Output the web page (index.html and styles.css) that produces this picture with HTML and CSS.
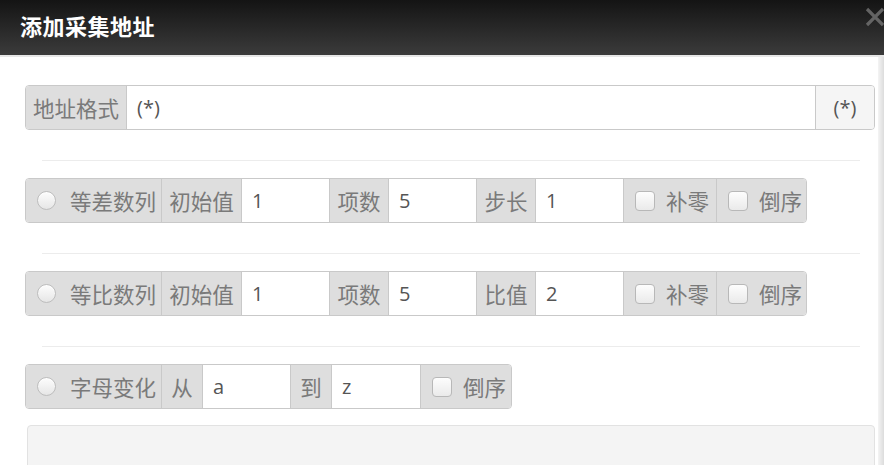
FILE: index.html
```html
<!DOCTYPE html>
<html lang="zh-CN">
<head>
<meta charset="utf-8">
<title>添加采集地址</title>
<link rel="stylesheet" href="styles.css">
</head>
<body>
<div class="modal">
  <div class="modal-header">
    <h1 class="modal-title">添加采集地址</h1>
    <svg class="close" width="20" height="20" viewBox="0 0 20 20" aria-label="关闭">
      <path d="M2 2 L18 18 M18 2 L2 18" stroke="#707070" stroke-width="3.2" stroke-linecap="butt" fill="none"/>
    </svg>
  </div>
  <div class="modal-body">
    <div class="group g-url">
      <span class="addon w-100 center">地址格式</span>
      <input class="field grow" type="text" value="(*)">
      <span class="addon light w-59 center">(*)</span>
    </div>
    <hr class="sep">
    <div class="group">
      <span class="addon w-135 left"><span class="radio"></span>等差数列</span>
      <span class="addon w-80 center">初始值</span>
      <input class="field w-88" type="text" value="1">
      <span class="addon w-59 center">项数</span>
      <input class="field w-88" type="text" value="5">
      <span class="addon w-59 center">步长</span>
      <input class="field w-88" type="text" value="1">
      <span class="addon w-93 left"><span class="check"></span>补零</span>
      <span class="addon w-90 left"><span class="check"></span>倒序</span>
    </div>
    <hr class="sep">
    <div class="group">
      <span class="addon w-135 left"><span class="radio"></span>等比数列</span>
      <span class="addon w-80 center">初始值</span>
      <input class="field w-88" type="text" value="1">
      <span class="addon w-59 center">项数</span>
      <input class="field w-88" type="text" value="5">
      <span class="addon w-59 center">比值</span>
      <input class="field w-88" type="text" value="2">
      <span class="addon w-93 left"><span class="check"></span>补零</span>
      <span class="addon w-90 left"><span class="check"></span>倒序</span>
    </div>
    <hr class="sep">
    <div class="group">
      <span class="addon w-135 left"><span class="radio"></span>字母变化</span>
      <span class="addon w-41 center">从</span>
      <input class="field w-88" type="text" value="a">
      <span class="addon w-41 center">到</span>
      <input class="field w-89" type="text" value="z">
      <span class="addon w-91 left"><span class="check"></span>倒序</span>
    </div>
    <div class="textbox"></div>
  </div>
  <div class="edge"></div>
</div>
</body>
</html>
```
FILE: styles.css
```css
html, body {
  margin: 0;
  padding: 0;
  background: #fff;
  overflow: hidden;
}
body {
  width: 884px;
  height: 465px;
  font-family: "Open Sans", "Noto Sans CJK SC", sans-serif;
}
.modal {
  position: relative;
  width: 884px;
  height: 465px;
  overflow: hidden;
}
.modal-header {
  height: 55px;
  background: linear-gradient(#141414, #3b3b3b);
  border-bottom: 2px solid #e6e6e6;
  display: flex;
  align-items: center;
  padding-left: 20px;
  box-sizing: content-box;
}
.modal-title {
  margin: 0 0 5px 0;
  color: #fff;
  font-family: "Noto Sans CJK SC", sans-serif;
  font-weight: 700;
  font-size: 22px;
  line-height: 26px;
  letter-spacing: 0.5px;
}
.close {
  position: absolute;
  left: 865px;
  top: 7px;
  opacity: 0.85;
}
.modal-body {
  padding: 28px 9px 0 25px;
}
.group {
  display: flex;
  height: 45px;
  box-sizing: border-box;
  border: 1px solid #c9c9c9;
  border-radius: 4px;
  overflow: hidden;
  width: max-content;
}
.g-url {
  width: 850px;
}
.addon {
  display: flex;
  align-items: center;
  box-sizing: border-box;
  background: #dedede;
  color: #7a7a7a;
  font-family: "Noto Sans CJK SC", sans-serif;
  font-size: 21.5px;
  border-left: 1px solid #c9c9c9;
  flex: none;
}
.addon.center {
  justify-content: center;
}
.addon.left {
  justify-content: flex-start;
  padding-left: 11px;
}
.addon:first-child {
  border-left: none;
}
.addon.light {
  background: #f5f5f5;
  color: #555;
  font-family: "Open Sans", sans-serif;
  font-size: 20px;
}
.field {
  flex: none;
  box-sizing: border-box;
  height: 100%;
  border: none;
  border-left: 1px solid #c9c9c9;
  margin: 0;
  padding: 0 0 0 10px;
  background: #fff;
  color: #555;
  font-family: "Open Sans", "Noto Sans CJK SC", sans-serif;
  font-size: 20px;
  outline: none;
}
.grow {
  flex: 1 1 auto;
  min-width: 0;
}
.w-41 { width: 41px; }
.w-59 { width: 59px; }
.w-80 { width: 80px; }
.w-88 { width: 88px; }
.w-89 { width: 89px; }
.w-90 { width: 90px; }
.w-91 { width: 91px; }
.w-93 { width: 93px; }
.w-100 { width: 100px; }
.w-135 { width: 135px; }
.radio {
  flex: none;
  width: 19px;
  height: 19px;
  border-radius: 50%;
  box-sizing: border-box;
  border: 1px solid #bdbdbd;
  background: linear-gradient(#fdfdfd, #e6e6e6);
  box-shadow: inset 0 1px 1px rgba(255,255,255,0.8);
  margin-right: 14px;
}
.check {
  flex: none;
  width: 20px;
  height: 20px;
  border-radius: 4px;
  box-sizing: border-box;
  border: 1px solid #b8b8b8;
  background: linear-gradient(#fdfdfd, #eaeaea);
  margin-right: 11px;
}
.sep {
  border: none;
  border-top: 1px solid #ececec;
  margin: 30px 15px 17px 17px;
  height: 0;
}
.textbox {
  margin: 16px 0 0 2px;
  height: 60px;
  background: #f4f4f4;
  border: 1px solid #e2e2e2;
  border-radius: 4px;
}
.edge {
  position: absolute;
  right: 0;
  top: 57px;
  bottom: 0;
  width: 6px;
  background: linear-gradient(to right, #f4f4f4, #dcdcdc);
}
```
